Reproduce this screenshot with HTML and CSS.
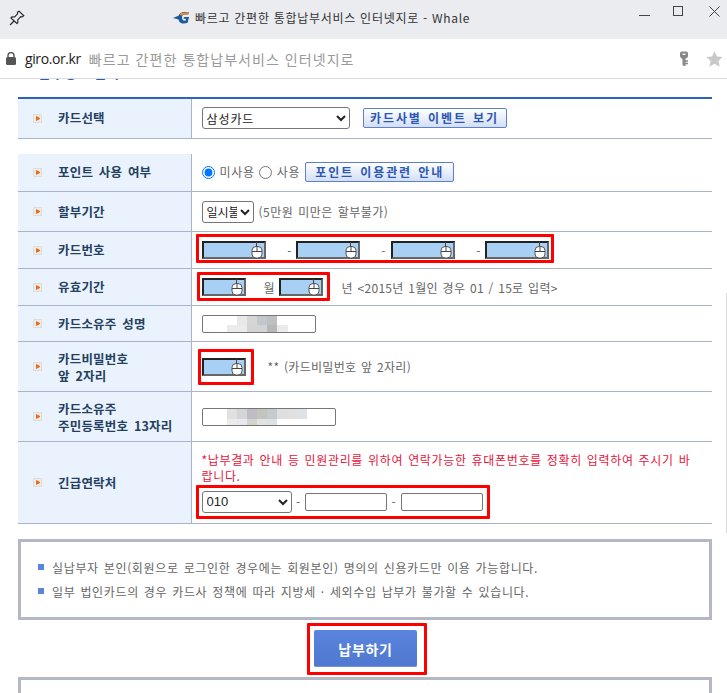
FILE: index.html
```html
<!DOCTYPE html>
<html lang="ko">
<head>
<meta charset="utf-8">
<title>빠르고 간편한 통합납부서비스 인터넷지로 - Whale</title>
<link rel="stylesheet" href="styles.css">
</head>
<body>
<div class="window">
  <header class="titlebar">
    <svg class="pin" width="16" height="16" viewBox="0 0 16 16" fill="none" stroke="#222" stroke-width="1.1"><path d="M10 1.2l4.8 4.6-1.6 1.2-1.5-.3-3 3.2.2 2.6-1 1-6-5.6 1-1 2.7.1 3-3.2-.2-1.5z"/><path d="M5 11l-4 4"/></svg>
    <div class="title">
      <svg class="logo" width="16" height="12" viewBox="0 0 16 12"><path d="M0 6l6-2.6h2.4L7 6.2 5.5 7.4z" fill="#1c5a9c"/><path d="M7 1.6C8 .6 9.500 0 11.500 0H16l-.8 2.400h-3.700c-1.700 0-2.500 1-2.500 2.800 0 2 .8 3.500 2.500 3.500h1l.6-2H10.500l.5-1.700h5l-1.400 5.800c-1 .4-2.400.7-3.800.7-3.300 0-5.300-1.800-5.300-5.300C5.500 3.900 6 2.600 7 1.600z" fill="#1c5a9c"/><path d="M8 1l8-1-.8 2.400h-3.700c-1 0-1.700.3-2.100 1L6.500 3z" fill="#ee8a2a"/></svg>
      <span>빠르고 간편한 통합납부서비스 인터넷지로 - Whale</span>
    </div>
    <div class="controls">
      <span class="ctl-min"></span>
      <span class="ctl-max"></span>
      <svg width="11" height="11" viewBox="0 0 11 11" stroke="#444" fill="none"><path d="M.5.500l10 10M10.500.500l-10 10"/></svg>
    </div>
  </header>
  <div class="addressbar">
    <svg class="lock" width="10" height="13" viewBox="0 0 10 13"><path d="M2 5.500V3.600a3 3 0 0 1 6 0v1.900" fill="none" stroke="#555" stroke-width="1.400"/><rect y="5" width="10" height="8" rx="1.500" fill="#555"/></svg>
    <span class="domain">giro.or.kr</span>
    <span class="page-title">빠르고 간편한 통합납부서비스 인터넷지로</span>
    <svg class="key" width="10" height="16" viewBox="0 0 10 16"><path d="M1 2.500Q1 .5 3 .5h4q2 0 2 2V5q0 2-2.500 2.500V15H5L3.500 14V8Q1 7 1 5z" fill="#888"/><path d="M6 10h3M6 12.500h3" stroke="#888" stroke-width="1.400"/><rect x="3.500" y="2.500" width="3" height="1.500" fill="#fff"/></svg>
    <svg class="star" width="17" height="16" viewBox="0 0 17 16"><path d="M8.500 0l2.500 5.500 5.700.6-4.300 3.900 1.300 5.800-5.200-3-5.200 3 1.300-5.800L.3 6.100 6 5.500z" fill="#c9c9c9"/></svg>
  </div>

  <main class="page">
    <div class="cut-heading"><h2>납부정보 입력</h2></div>

    <table class="form first">
      <tr class="h40">
        <th><span class="label"><i class="arrow"></i>카드선택</span></th>
        <td>
          <div class="line">
            <select class="sel-card"><option>삼성카드</option></select>
            <button class="soft-btn btn-event" type="button">카드사별 이벤트 보기</button>
          </div>
        </td>
      </tr>
    </table>

    <table class="form second">
      <tr class="h38">
        <th><span class="label"><i class="arrow"></i>포인트 사용 여부</span></th>
        <td>
          <div class="line">
            <input class="radio" type="radio" name="point" checked>
            <span class="radio-text">미사용</span>
            <input class="radio" type="radio" name="point">
            <span class="radio-text">사용</span>
            <button class="soft-btn btn-point" type="button">포인트 이용관련 안내</button>
          </div>
        </td>
      </tr>
      <tr class="h40">
        <th><span class="label"><i class="arrow"></i>할부기간</span></th>
        <td>
          <div class="line">
            <select class="sel-term"><option>일시불</option></select>
            <span class="hint hint-term">(5만원 미만은 할부불가)</span>
          </div>
        </td>
      </tr>
      <tr class="h37">
        <th><span class="label"><i class="arrow"></i>카드번호</span></th>
        <td>
          <div class="line marked mark-card">
            <span class="secure wide"><input type="text"><svg class="mouse" width="13" height="17" viewBox="0 0 13 17"><use href="#mouse-shape"/></svg></span>
            <span class="sep">-</span>
            <span class="secure wide"><input type="text"><svg class="mouse" width="13" height="17" viewBox="0 0 13 17"><use href="#mouse-shape"/></svg></span>
            <span class="sep sep-wide">-</span>
            <span class="secure wide"><input type="text"><svg class="mouse" width="13" height="17" viewBox="0 0 13 17"><use href="#mouse-shape"/></svg></span>
            <span class="sep">-</span>
            <span class="secure wide"><input type="text"><svg class="mouse" width="13" height="17" viewBox="0 0 13 17"><use href="#mouse-shape"/></svg></span>
          </div>
        </td>
      </tr>
      <tr class="h37">
        <th><span class="label"><i class="arrow"></i>유효기간</span></th>
        <td>
          <div class="line">
            <span class="marked mark-exp">
              <span class="secure short"><input type="text"><svg class="mouse" width="13" height="17" viewBox="0 0 13 17"><use href="#mouse-shape"/></svg></span>
              <span class="unit">월</span>
              <span class="secure short"><input type="text"><svg class="mouse" width="13" height="17" viewBox="0 0 13 17"><use href="#mouse-shape"/></svg></span>
            </span>
            <span class="hint hint-exp">년 &lt;2015년 1월인 경우 01 / 15로 입력&gt;</span>
          </div>
        </td>
      </tr>
      <tr class="h36">
        <th><span class="label"><i class="arrow"></i>카드소유주 성명</span></th>
        <td>
          <div class="line">
            <span class="masked">
              <input class="plain name-input" type="text">
              <svg class="mosaic" width="114" height="18" viewBox="0 0 114 18"><rect x="35" y="1" width="10" height="9" fill="#e8e8e8"/><rect x="45" y="1" width="10" height="9" fill="#d6d6d4"/><rect x="55" y="1" width="10" height="9" fill="#c3c6cb"/><rect x="65" y="1" width="10" height="9" fill="#bcc0c0"/><rect x="25" y="10" width="10" height="7" fill="#ececec"/><rect x="35" y="10" width="10" height="7" fill="#ebebeb"/><rect x="45" y="10" width="10" height="7" fill="#d4d4d0"/><rect x="55" y="10" width="10" height="7" fill="#d0d3d8"/><rect x="65" y="10" width="10" height="7" fill="#b6b9b7"/><rect x="75" y="10" width="11" height="7" fill="#ebebeb"/></svg>
            </span>
          </div>
        </td>
      </tr>
      <tr class="h50">
        <th><span class="label two"><i class="arrow"></i><span>카드비밀번호<br>앞 2자리</span></span></th>
        <td>
          <div class="line">
            <span class="marked mark-pin">
              <span class="secure short"><input type="text"><svg class="mouse" width="13" height="17" viewBox="0 0 13 17"><use href="#mouse-shape"/></svg></span>
            </span>
            <span class="hint hint-pin">** (카드비밀번호 앞 2자리)</span>
          </div>
        </td>
      </tr>
      <tr class="h50">
        <th><span class="label two"><i class="arrow"></i><span>카드소유주<br>주민등록번호 13자리</span></span></th>
        <td>
          <div class="line">
            <span class="masked">
              <input class="plain rrn-input" type="text">
              <svg class="mosaic" width="134" height="18" viewBox="0 0 134 18"><rect x="25" y="1" width="10" height="10" fill="#e0e0de"/><rect x="35" y="1" width="10" height="10" fill="#d4d5d8"/><rect x="45" y="1" width="10" height="10" fill="#bfbcc6"/><rect x="55" y="1" width="10" height="10" fill="#c2c4bd"/><rect x="65" y="1" width="10" height="10" fill="#c3cbcf"/><rect x="75" y="1" width="10" height="10" fill="#dfdfdf"/><rect x="85" y="1" width="10" height="10" fill="#e2e0de"/><rect x="95" y="1" width="10" height="10" fill="#dde2e6"/><rect x="25" y="11" width="10" height="6" fill="#ebebeb"/><rect x="35" y="11" width="10" height="6" fill="#e8e8ee"/><rect x="45" y="11" width="10" height="6" fill="#d3d5ca"/><rect x="55" y="11" width="10" height="6" fill="#e2e2e2"/><rect x="65" y="11" width="10" height="6" fill="#dfdfe6"/></svg>
            </span>
          </div>
        </td>
      </tr>
      <tr class="h82">
        <th><span class="label"><i class="arrow"></i>긴급연락처</span></th>
        <td>
          <p class="warn">*납부결과 안내 등 민원관리를 위하여 연락가능한 휴대폰번호를 정확히 입력하여 주시기 바<br>랍니다.</p>
          <div class="line marked mark-phone">
            <select class="sel-phone"><option>010</option></select>
            <span class="dash">-</span>
            <input class="plain phone-input" type="text">
            <span class="dash dash-wide">-</span>
            <input class="plain phone-input" type="text">
          </div>
        </td>
      </tr>
    </table>

    <ul class="notice">
      <li>실납부자 본인(회원으로 로그인한 경우에는 회원본인) 명의의 신용카드만 이용 가능합니다.</li>
      <li>일부 법인카드의 경우 카드사 정책에 따라 지방세 · 세외수입 납부가 불가할 수 있습니다.</li>
    </ul>

    <div class="actions">
      <span class="marked mark-pay"><button class="pay" type="button">납부하기</button></span>
    </div>

    <div class="next-box"></div>
  </main>
  <span class="scroll-thumb"></span>
</div>
<svg class="defs" width="0" height="0">
  <defs>
    <g id="mouse-shape" fill="none" stroke="#444" stroke-width="1">
      <path d="M5.500 0v5"/>
      <rect x="1" y="4.500" width="10" height="11.500" rx="4" fill="#fff" stroke="#555"/>
      <path d="M1 9.500h10M6 4.500v5"/>
    </g>
  </defs>
</svg>
</body>
</html>
```
FILE: styles.css
```css
*, *::before, *::after { box-sizing: border-box; }
html, body { margin: 0; padding: 0; height: 100%; overflow: hidden; background: #fff; }
body { font-family: "Noto Sans CJK KR", "Noto Sans", sans-serif; font-size: 12px; color: #666; }
.defs { position: absolute; }
.window { position: relative; width: 727px; height: 693px; overflow: hidden; display: flex; flex-direction: column; }

.titlebar { height: 39px; background: #ebecf0; display: flex; align-items: flex-start; flex: none; }
.pin { margin: 10px 0 0 9px; flex: none; }
.title { margin: 11px 0 0 148px; display: flex; align-items: center; gap: 6px; font-size: 12px; line-height: 14px; color: #333; white-space: nowrap; letter-spacing: .72px; }
.logo { flex: none; }
.controls { margin-left: auto; display: flex; align-items: flex-start; }
.ctl-min { width: 11px; height: 1px; background: #444; margin: 15px 23px 0 0; }
.ctl-max { width: 10px; height: 10px; border: 1px solid #444; margin: 6px 26px 0 0; }
.controls svg { margin: 6px 7px 0 0; }

.addressbar { height: 40px; background: #fff; border-bottom: 1px solid #dcdcdc; display: flex; align-items: center; padding-left: 6px; flex: none; white-space: nowrap; }
.lock { flex: none; }
.domain { margin-left: 9px; font: 14px/18px "Open Sans", "Noto Sans", sans-serif; color: #222; letter-spacing: -.4px; }
.page-title { margin-left: 8px; font-size: 14px; line-height: 18px; color: #9a9a9a; letter-spacing: 1.05px; }
.key { margin-left: auto; flex: none; }
.star { margin: 0 4px 0 17px; flex: none; }

.page { flex: 1; padding: 0 15px 0 18px; overflow: hidden; }
.cut-heading { height: 18px; overflow: hidden; position: relative; }
.cut-heading h2 { margin: -15px 0 0 20px; font-size: 14px; line-height: 16px; color: #2a5ab8; font-weight: 700; }

.form { width: 694px; border-collapse: collapse; table-layout: fixed; }
.form.first { border-top: 2px solid #2b63bd; }
.form.second { margin-top: 15px; }
.form tr { border-bottom: 1px solid #a9b4cb; }
.form th { width: 173px; padding: 0; background: #e9f2fd; border-right: 1px solid #a9b4cb; text-align: left; font-weight: 700; }
.form td { padding: 0 0 0 10px; vertical-align: middle; }
.h36 { height: 36px; }
.h37 { height: 37px; }
.h38 { height: 38px; }
.h40 { height: 40px; }
.h50 { height: 50px; }
.h82 { height: 82px; }

.label { display: flex; align-items: center; padding-left: 15px; font-size: 12.500px; line-height: 16px; color: #24405e; word-spacing: 2px; letter-spacing: .2px; }
.label.two { line-height: 17px; }
.arrow { width: 9px; height: 9px; margin-right: 16px; flex: none; background: #ececec; border: 1px solid #e0dcd8; position: relative; }
.arrow::after { content: ""; position: absolute; left: 2px; top: 1px; width: 4px; height: 5px; border-left: 4px solid #ee6a1a; border-top: 2.500px solid transparent; border-bottom: 2.500px solid transparent; }

.line { display: flex; align-items: center; }
select { font: 12px "Noto Sans CJK KR", sans-serif; color: #222; background: #fff; border: 1px solid #767676; border-radius: 3px; padding: 0; height: 22px; }
.sel-card { width: 148px; letter-spacing: .9px; }
.sel-term { width: 52px; }
.sel-phone { width: 90px; font-family: "Liberation Sans", sans-serif; font-size: 13px; }
.soft-btn { height: 20px; padding: 0; border: 1px solid #5d80c8; border-radius: 2px; background: linear-gradient(#fff, #d3def5); color: #2b57b6; font: 700 12px/16px "Noto Sans CJK KR", sans-serif; letter-spacing: 1.9px; word-spacing: 1px; }
.btn-event { width: 144px; margin-left: 13px; }
.btn-point { width: 149px; margin-left: 1px; }

.radio { width: 13px; height: 13px; margin: 0; accent-color: #0075ff; flex: none; }
.radio-text { margin: 0 4px 0 5px; color: #666; letter-spacing: .7px; position: relative; top: -1px; }
.hint { color: #666; white-space: nowrap; letter-spacing: .3px; word-spacing: 1px; }
.hint-term { margin-left: 5px; letter-spacing: .5px; }
.hint-exp { margin-left: 19px; }
.hint-pin { margin-left: 22px; }

.secure { position: relative; display: block; flex: none; height: 18px; }
.secure.wide { width: 64px; }
.secure.short { width: 44px; }
.secure input { display: block; width: 100%; height: 100%; padding: 0; background: #a8d0f5; border: 2px solid; border-color: #222 #666 #666 #222; outline: 0; }
.mouse { position: absolute; right: 2px; top: 1px; }
.sep { width: 30px; flex: none; text-align: right; padding-right: 4px; color: #666; }
.sep-wide { width: 31px; padding-right: 5px; }
.unit { width: 33px; flex: none; text-align: right; padding-right: 4px; color: #666; }

.marked { position: relative; }
.marked::after { content: ""; position: absolute; border: 3px solid #f00; border-radius: 1px; pointer-events: none; }
.mark-card::after { left: -6px; top: -7px; width: 358px; height: 29px; }
.mark-exp { display: flex; align-items: center; }
.mark-exp::after { left: -5px; top: -6px; width: 133px; height: 29px; }
.mark-pin { display: block; }
.mark-pin::after { left: -4px; top: -9px; width: 56px; height: 36px; }
.mark-phone::after { left: -6px; top: -6px; width: 294px; height: 34px; }
.mark-pay { display: block; }
.mark-pay::after { left: -6px; top: -7px; width: 120px; height: 52px; }

.plain { display: block; height: 18px; padding: 0; background: #fff; border: 1px solid #767676; border-radius: 2px; flex: none; }
.name-input { width: 114px; }
.rrn-input { width: 134px; }
.phone-input { width: 82px; }
.masked { position: relative; display: block; }
.mosaic { position: absolute; left: 0; top: 0; }
.dash { width: 13px; text-align: center; flex: none; }
.dash-wide { width: 14px; }

.warn { margin: -1px 0 7px; font-size: 12px; line-height: 16px; color: #e8143c; letter-spacing: .65px; word-spacing: 1px; white-space: nowrap; }

.notice { list-style: none; margin: 15px 0 0; padding: 18px 0 0 17px; width: 694px; height: 81px; border: 3px solid #b4b8c6; }
.notice li { position: relative; padding-left: 14px; line-height: 16px; margin-bottom: 8px; color: #666; letter-spacing: .65px; word-spacing: 1px; white-space: nowrap; }
.notice li::before { content: ""; position: absolute; left: 0; top: 4px; width: 6px; height: 6px; background: #5b86d8; }

.actions { display: flex; justify-content: center; padding: 10px 0; }
.pay { display: block; width: 103px; height: 37px; padding: 0; margin-left: 1px; border: 0; border-radius: 2px; background: linear-gradient(#5a84de, #4f78cf); box-shadow: inset 0 -1px 0 #6f93dd; color: #fff; font: 700 14px "Noto Sans CJK KR", sans-serif; letter-spacing: .7px; }
.next-box { width: 694px; height: 40px; border: 3px solid #b4b8c6; }
.scroll-thumb { position: absolute; right: 0; top: 293px; width: 1px; height: 240px; background: #dcdcdc; }
```
